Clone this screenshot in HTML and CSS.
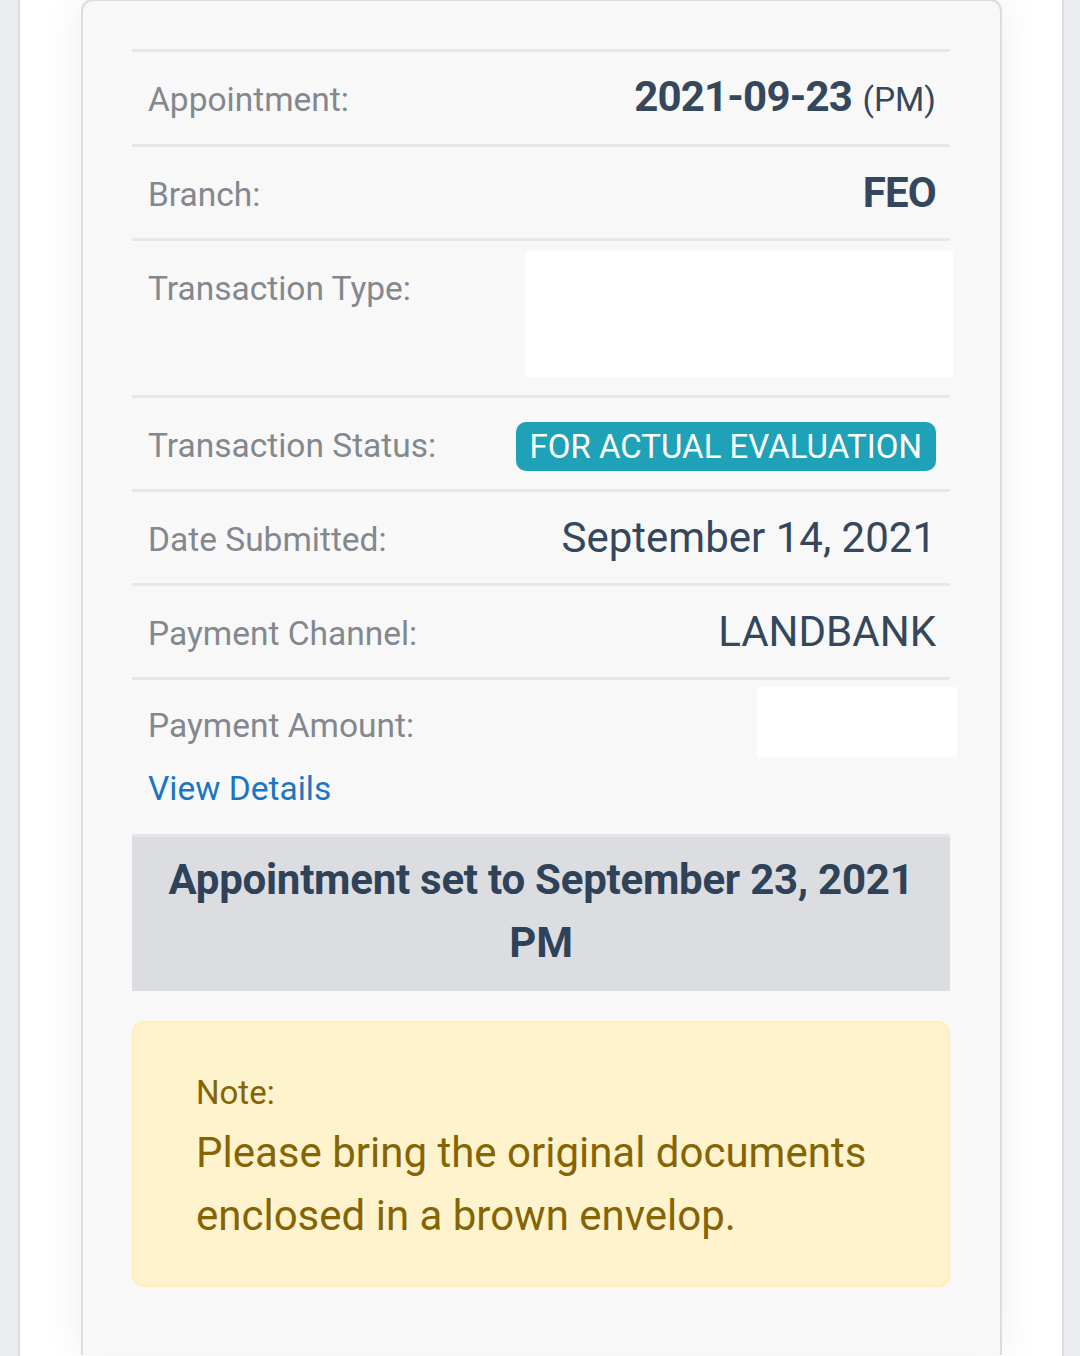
FILE: index.html
```html
<!DOCTYPE html>
<html lang="en">
<head>
<meta charset="utf-8">
<title>Appointment Details</title>
<link rel="stylesheet" href="styles.css">
</head>
<body>
<div class="column">
  <div class="card">
    <div class="table">
      <div class="row row-first">
        <span class="label">Appointment:</span>
        <span class="value"><strong class="strong">2021-09-23</strong> <span class="small">(PM)</span></span>
      </div>
      <div class="row">
        <span class="label">Branch:</span>
        <span class="value"><strong class="strong">FEO</strong></span>
      </div>
      <div class="row row-top">
        <span class="label label-top">Transaction Type:</span>
        <div class="redact redact-type"></div>
      </div>
      <div class="row">
        <span class="label">Transaction Status:</span>
        <span class="badge">FOR ACTUAL EVALUATION</span>
      </div>
      <div class="row">
        <span class="label">Date Submitted:</span>
        <span class="value">September 14, 2021</span>
      </div>
      <div class="row">
        <span class="label">Payment Channel:</span>
        <span class="value">LANDBANK</span>
      </div>
      <div class="row-amount">
        <div class="amount-line">
          <span class="label label-amount">Payment Amount:</span>
          <div class="redact redact-amount"></div>
        </div>
        <a class="link" href="#">View Details</a>
      </div>
    </div>
    <div class="notice">Appointment set to September 23, 2021 PM</div>
    <div class="note">
      <div class="note-title">Note:</div>
      <p class="note-text">Please bring the original documents enclosed in a brown envelop.</p>
    </div>
  </div>
</div>
</body>
</html>
```
FILE: styles.css
```css
html, body {
  margin: 0;
  padding: 0;
}
body {
  background: #ebecf0;
  font-family: Roboto, "Liberation Sans", sans-serif;
  height: 1356px;
  overflow: hidden;
}
.column {
  margin: 0 16px 0 18px;
  border-left: 2px solid #dcdcdc;
  border-right: 2px solid #dcdcdc;
  background: #ffffff;
  height: 1356px;
  box-sizing: border-box;
  overflow: hidden;
  padding: 0 60px 0 61px;
}
.card {
  background: #f8f8f8;
  border: 2px solid #dcdcdc;
  border-bottom: none;
  border-radius: 12px 12px 0 0;
  box-shadow: 0 0 40px rgba(0, 0, 0, 0.07);
  padding: 48px 50px 68px 49px;
  margin-top: -1px;
}
.table {
  display: flex;
  flex-direction: column;
}
.row {
  display: flex;
  align-items: center;
  justify-content: space-between;
  border-top: 3px solid #e6e7ea;
  padding: 0 14px 0 16px;
  min-height: 91px;
}
.row-first {
  min-height: 92px;
}
.row-top {
  align-items: flex-start;
  padding: 10px 0 18px 16px;
  min-height: 0;
}
.label {
  font-size: 33.5px;
  line-height: 40px;
  color: #83888f;
  position: relative;
  top: 2px;
}
.label-top {
  margin-top: 16px;
}
.value {
  font-size: 42px;
  line-height: 50px;
  color: #34475c;
}
.strong {
  font-weight: 700;
  letter-spacing: -0.8px;
}
.small {
  font-size: 33.5px;
}
.redact {
  background: #ffffff;
}
.redact-type {
  width: 427px;
  height: 126px;
  margin-right: -3px;
}
.badge {
  background: #1fa2b8;
  color: #ffffff;
  font-size: 33px;
  line-height: 39px;
  padding: 5px 14px;
  border-radius: 10px;
  position: relative;
  top: 3px;
}
.row-amount {
  border-top: 3px solid #e6e7ea;
  padding: 7px 0 25px 16px;
  display: flex;
  flex-direction: column;
  align-items: flex-start;
}
.amount-line {
  align-self: stretch;
  display: flex;
  justify-content: space-between;
  align-items: flex-start;
}
.label-amount {
  margin-top: 17px;
}
.redact-amount {
  width: 200px;
  height: 70px;
  margin-right: -7px;
}
.link {
  margin-top: 12px;
  font-size: 33.5px;
  line-height: 40px;
  color: #1b76c2;
  text-decoration: none;
}
.notice {
  background: #dcdde1;
  border-top: 3px solid #e5e6e9;
  padding: 11px 16px 17px;
  text-align: center;
  font-size: 42px;
  line-height: 63px;
  font-weight: 700;
  letter-spacing: -0.25px;
  color: #2e4259;
}
.note {
  margin-top: 30px;
  background: #fff3cd;
  border: 2px solid #ffeeba;
  border-radius: 12px;
  padding: 50px 62px 38px;
  color: #856404;
}
.note-title {
  font-size: 33px;
  line-height: 40px;
}
.note-text {
  margin: 8px 0 0;
  font-size: 42px;
  line-height: 63px;
}
```
